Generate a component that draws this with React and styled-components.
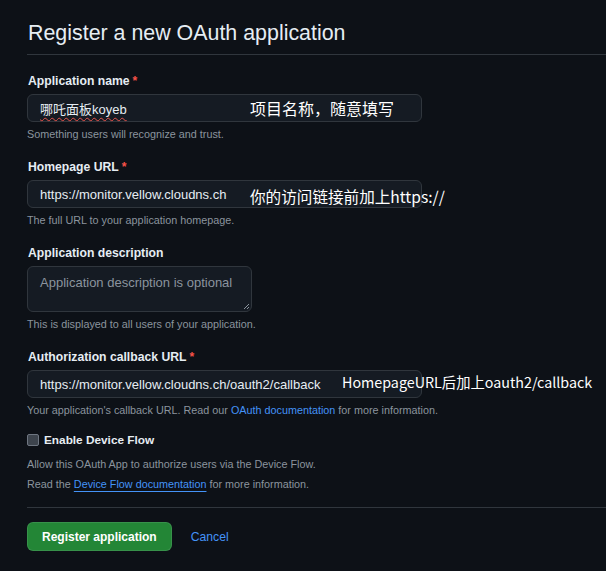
import React from "react";
import styled, { createGlobalStyle } from "styled-components";

const GlobalStyle = createGlobalStyle`
  html, body {
    margin: 0;
    padding: 0;
    background: #0d1117;
  }
  body {
    font-family: "Liberation Sans", "Noto Sans CJK SC", sans-serif;
    color: #e6edf3;
  }
`;

const Page = styled.div`
  min-height: 571px;
  padding: 17px 0 0 27px;
  box-sizing: border-box;
  background: #0d1117;
  overflow: hidden;
`;

const Title = styled.h2`
  margin: 0;
  padding: 0 0 5px 1px;
  font-size: 21.4px;
  line-height: 32px;
  font-weight: 400;
  color: #e6edf3;
  border-bottom: 1px solid #30363d;
`;

const Form = styled.div`
  width: 395px;
  padding-top: 17px;
`;

const Group = styled.div`
  margin-bottom: ${(p) => (p.$last ? 0 : 16)}px;
`;

const Label = styled.div`
  font-size: 12.2px;
  line-height: 18px;
  font-weight: 700;
  color: #e6edf3;
  margin-bottom: 4px;
  margin-left: 1px;
`;

const Star = styled.span`
  color: #f85149;
  margin-left: 3px;
`;

const FieldWrap = styled.div`
  position: relative;
  width: ${(p) => p.$width || "395px"};
`;

const Field = styled.div`
  box-sizing: border-box;
  height: ${(p) => p.$height || "28px"};
  border: 1px solid #30363d;
  border-radius: 6px;
  background: #151b23;
  padding: ${(p) => (p.$multi ? "8px 12px" : "0 12px")};
  display: flex;
  align-items: ${(p) => (p.$multi ? "flex-start" : "center")};
  font-size: 13px;
  color: ${(p) => (p.$placeholder ? "#8b949e" : "#e6edf3")};
  white-space: nowrap;
`;

const Misspelled = styled.span`
  text-decoration: underline wavy #e5534b;
  text-decoration-thickness: 1px;
  text-underline-offset: 3px;
`;

const Grip = styled.svg`
  position: absolute;
  right: 2px;
  bottom: 2px;
`;

const Note = styled.span`
  position: absolute;
  left: ${(p) => p.$left}px;
  top: ${(p) => p.$top}px;
  font-family: "Noto Sans CJK SC", "Noto Sans", sans-serif;
  font-size: ${(p) => p.$size}px;
  line-height: 20px;
  color: #ffffff;
  white-space: nowrap;
`;

const Hint = styled.div`
  margin-top: 4px;
  font-size: 10.8px;
  line-height: 16px;
  color: #8b949e;
  white-space: nowrap;
`;

const Link = styled.a`
  color: #4493f8;
  text-decoration: ${(p) => (p.$underline ? "underline" : "none")};
  text-underline-offset: 3px;
`;

const CheckRow = styled.label`
  display: flex;
  align-items: center;
  gap: 5px;
  margin-top: 13px;
  font-size: 11.8px;
  line-height: 18px;
  font-weight: 700;
  color: #e6edf3;
`;

const Box = styled.span`
  width: 10px;
  height: 10px;
  border: 1px solid #6e7681;
  border-radius: 2px;
  background: #3d444d;
`;

const Info = styled.div`
  margin-top: ${(p) => p.$gap}px;
  font-size: 10.8px;
  line-height: 16px;
  color: #8b949e;
  white-space: nowrap;
`;

const Divider = styled.hr`
  margin: 15px 0 14px;
  border: 0;
  border-top: 1px solid #30363d;
`;

const Actions = styled.div`
  display: flex;
  align-items: center;
  gap: 19px;
`;

const Button = styled.button`
  height: 29px;
  padding: 0 14px;
  border: 1px solid rgba(240, 246, 252, 0.1);
  border-radius: 6px;
  background: #238636;
  color: #ffffff;
  font-family: inherit;
  font-size: 12px;
  font-weight: 700;
`;

const Cancel = styled.a`
  color: #4493f8;
  font-size: 12.2px;
`;

export default function App() {
  return (
    <>
      <GlobalStyle />
      <Page>
        <Title>Register a new OAuth application</Title>
        <Form>
          <Group>
            <Label>
              Application name<Star>*</Star>
            </Label>
            <FieldWrap>
              <Field>
                <Misspelled>哪吒面板koyeb</Misspelled>
              </Field>
              <Note $left={223} $top={4} $size={16}>项目名称，随意填写</Note>
            </FieldWrap>
            <Hint>Something users will recognize and trust.</Hint>
          </Group>

          <Group>
            <Label>
              Homepage URL<Star>*</Star>
            </Label>
            <FieldWrap>
              <Field>https://monitor.vellow.cloudns.ch</Field>
              <Note $left={223} $top={6} $size={15.6}>你的访问链接前加上https://</Note>
            </FieldWrap>
            <Hint>The full URL to your application homepage.</Hint>
          </Group>

          <Group>
            <Label>Application description</Label>
            <FieldWrap $width="225px">
              <Field $multi $placeholder $height="46px">
                Application description is optional
              </Field>
              <Grip width="7" height="7" viewBox="0 0 7 7">
                <path d="M6 1L1 6M6 4L4 6" stroke="#8b949e" strokeWidth="1" />
              </Grip>
            </FieldWrap>
            <Hint>This is displayed to all users of your application.</Hint>
          </Group>

          <Group $last>
            <Label>
              Authorization callback URL<Star>*</Star>
            </Label>
            <FieldWrap>
              <Field>https://monitor.vellow.cloudns.ch/oauth2/callback</Field>
              <Note $left={315} $top={2} $size={14.3}>HomepageURL后加上oauth2/callback</Note>
            </FieldWrap>
            <Hint>
              Your application's callback URL. Read our{" "}
              <Link>OAuth documentation</Link> for more information.
            </Hint>
          </Group>

          <CheckRow>
            <Box />
            Enable Device Flow
          </CheckRow>
          <Info $gap={7}>
            Allow this OAuth App to authorize users via the Device Flow.
          </Info>
          <Info $gap={4}>
            Read the <Link $underline>Device Flow documentation</Link> for more
            information.
          </Info>
        </Form>
        <Divider />
        <Actions>
          <Button>Register application</Button>
          <Cancel>Cancel</Cancel>
        </Actions>
      </Page>
    </>
  );
}
